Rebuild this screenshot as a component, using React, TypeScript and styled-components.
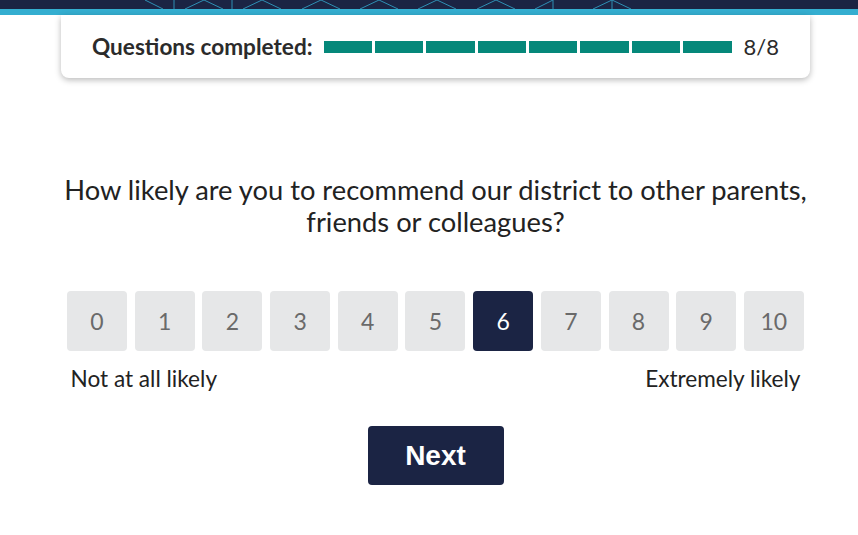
import React, { useState } from "react";
import styled, { createGlobalStyle } from "styled-components";

const Global = createGlobalStyle`
  html, body { margin: 0; padding: 0; background: #fff; }
  body { font-family: Lato, "Open Sans", sans-serif; color: #222; }
  * { box-sizing: border-box; }
`;

const Header = styled.header`
  height: 15px;
  background: #1b2444;
  border-bottom: 6px solid #34aed0;
  display: flex;
`;

const Pattern = styled.svg`
  display: block;
  width: 100%;
  height: 9px;
`;

const Page = styled.main`
  padding: 0 48px 40px 61px;
  display: flex;
  flex-direction: column;
  align-items: center;
`;

const ProgressCard = styled.section`
  width: 100%;
  height: 63px;
  background: #fff;
  border-radius: 0 0 8px 8px;
  box-shadow: 0 2px 6px rgba(0, 0, 0, 0.28);
  display: flex;
  align-items: center;
  gap: 11px;
  padding: 0 31px;
  font-size: 22px;
  color: #2b2b2b;
`;

const ProgressLabel = styled.span`
  font-weight: 700;
  font-size: 22.6px;
`;

const Segments = styled.div`
  flex: 1;
  display: grid;
  grid-template-columns: repeat(8, 1fr);
  gap: 3px;
`;

const Segment = styled.div<{ $done: boolean }>`
  height: 12px;
  background: ${(p) => (p.$done ? "#05887a" : "#e0e0e0")};
`;

const Count = styled.span`
  font-weight: 400;
  margin-left: 1px;
`;

const Question = styled.h1`
  margin: 96px 0 0;
  font-size: 27.3px;
  line-height: 32px;
  font-weight: 400;
  text-align: center;
  color: #222;
`;

const Scale = styled.div`
  margin-top: 53px;
  width: 737px;
  display: flex;
  justify-content: space-between;
`;

const ScoreButton = styled.button<{ $selected: boolean }>`
  width: 60px;
  height: 60px;
  border: none;
  border-radius: 4px;
  font-family: Lato, sans-serif;
  font-size: 23px;
  background: ${(p) => (p.$selected ? "#1b2444" : "#e6e7e8")};
  color: ${(p) => (p.$selected ? "#fff" : "#6a6a6a")};
  cursor: pointer;
  padding: 0;
`;

const Labels = styled.div`
  margin-top: 16px;
  width: 730px;
  display: flex;
  justify-content: space-between;
  font-size: 22.6px;
  line-height: 24px;
  color: #222;
`;

const NextButton = styled.button`
  margin-top: 35px;
  width: 136px;
  height: 59px;
  border: none;
  border-radius: 4px;
  background: #1b2444;
  color: #fff;
  font-family: "Liberation Sans", Arial, sans-serif;
  font-weight: 700;
  font-size: 28px;
  cursor: pointer;
`;

const peaks = [204, 262, 321, 379, 437, 496, 612];
const verticals = [174, 232, 553, 612];

export default function App() {
  const [score, setScore] = useState(6);
  return (
    <>
      <Global />
      <Header>
        <Pattern viewBox="0 0 858 9" preserveAspectRatio="none">
          <g stroke="#2f8fb4" strokeWidth="1" fill="none">
            <line x1="145" y1="0" x2="163" y2="9" />
            {peaks.map((x) => (
              <polyline key={x} points={`${x - 19},9 ${x},0 ${x + 19},9`} />
            ))}
            <line x1="535" y1="9" x2="553" y2="0" />
            {verticals.map((x) => (
              <line key={x} x1={x} y1="0" x2={x} y2="9" />
            ))}
          </g>
        </Pattern>
      </Header>
      <Page>
        <ProgressCard>
          <ProgressLabel>Questions completed:</ProgressLabel>
          <Segments>
            {Array.from({ length: 8 }).map((_, i) => (
              <Segment key={i} $done />
            ))}
          </Segments>
          <Count>8/8</Count>
        </ProgressCard>
        <Question>
          How likely are you to recommend our district to other parents,
          <br />
          friends or colleagues?
        </Question>
        <Scale>
          {Array.from({ length: 11 }).map((_, i) => (
            <ScoreButton key={i} $selected={score === i} onClick={() => setScore(i)}>
              {i}
            </ScoreButton>
          ))}
        </Scale>
        <Labels>
          <span>Not at all likely</span>
          <span>Extremely likely</span>
        </Labels>
        <NextButton>Next</NextButton>
      </Page>
    </>
  );
}
